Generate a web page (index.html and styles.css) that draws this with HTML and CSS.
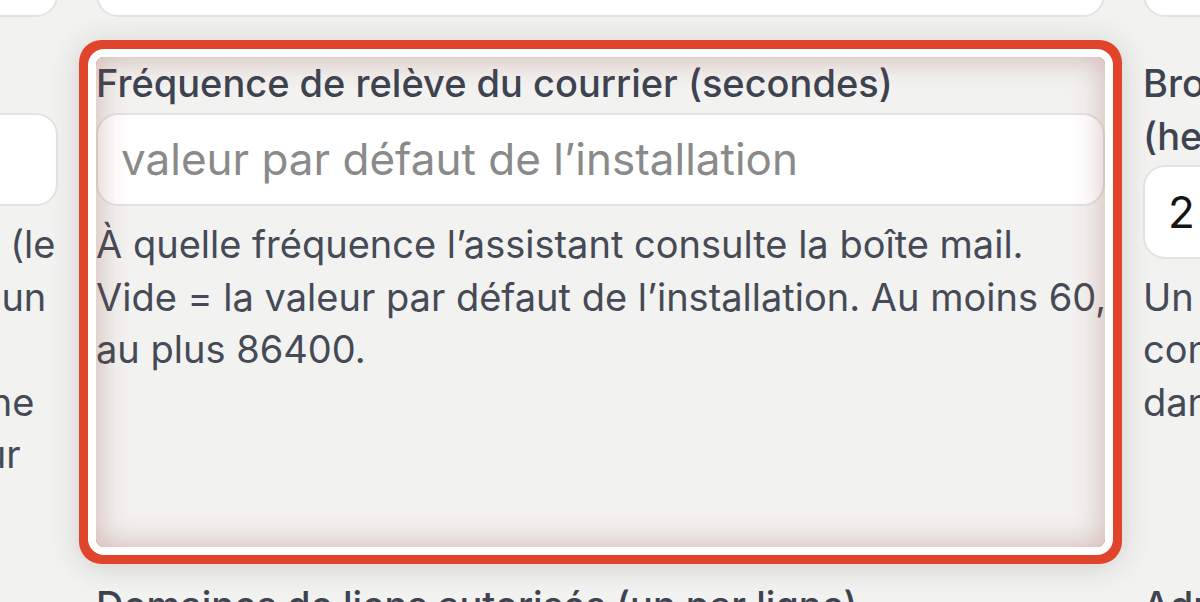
FILE: index.html
```html
<!DOCTYPE html>
<html lang="fr">
<head>
<meta charset="utf-8">
<title>Paramètres de l’assistant</title>
<link rel="stylesheet" href="styles.css">
</head>
<body>
<main class="settings">
  <div class="grid">
    <div class="field">
      <label class="label">Nom affiché</label>
      <input class="input" value="Assistant">
    </div>
    <div class="field">
      <label class="label">Adresse de la boîte mail</label>
      <input class="input" value="assistant@exemple.fr">
    </div>
    <div class="field">
      <label class="label">Serveur IMAP</label>
      <input class="input" value="imap.exemple.fr">
    </div>

    <div class="field">
      <label class="label">Messages par relève</label>
      <input class="input" placeholder="sans limite">
      <p class="help">Nombre maximal de messages relevés à chaque tour (le<br>surplus attend la relève suivante). Vide = sans limite, un<br>message à la fois sinon.<br>Une valeur trop élevée ralentit la relève si le serveur ne<br>répond pas assez vite et freine les autres relèves pour<br>tous les assistants.</p>
    </div>
    <div class="field field--highlight">
      <label class="label">Fréquence de relève du courrier (secondes)</label>
      <input class="input" placeholder="valeur par défaut de l’installation">
      <p class="help">À quelle fréquence l’assistant consulte la boîte mail.<br>Vide = la valeur par défaut de l’installation. Au moins 60,<br>au plus 86400.</p>
    </div>
    <div class="field">
      <label class="label">Brouillons : durée de conservation<br>(heures)</label>
      <input class="input" value="2">
      <p class="help">Un brouillon non envoyé est supprimé après ce délai,<br>conservé sinon dans le dossier des brouillons<br>dans la boîte mail.</p>
    </div>

    <div class="field">
      <label class="label">Signature</label>
    </div>
    <div class="field">
      <label class="label">Domaines de liens autorisés (un par ligne)</label>
    </div>
    <div class="field">
      <label class="label">Adresses autorisées (une par ligne)</label>
    </div>
  </div>
</main>
</body>
</html>
```
FILE: styles.css
```css
html, body {
  margin: 0;
  padding: 0;
}

body {
  width: 1200px;
  height: 602px;
  overflow: hidden;
  background: #f2f2f0;
  font-family: Inter, "Noto Sans", "Liberation Sans", sans-serif;
  color: #414652;
}

.grid {
  display: grid;
  grid-template-columns: repeat(3, 1009px);
  column-gap: 38px;
  row-gap: 32px;
  margin-left: -951px;
  margin-top: -132px;
}

.field {
  display: flex;
  flex-direction: column;
  padding-bottom: 8px;
  min-width: 0;
}

.label {
  font-size: 38px;
  line-height: 52.5px;
  font-weight: 500;
  color: #3e4350;
  margin-bottom: 3px;
}

.input {
  box-sizing: border-box;
  width: 100%;
  height: 93.5px;
  margin: 0;
  padding: 0 23px;
  border: 2px solid #e3e3e1;
  border-radius: 22px;
  background: #ffffff;
  font-family: inherit;
  font-size: 44px;
  color: #141414;
  outline: none;
}

.input::placeholder {
  color: #8a8a8a;
  opacity: 1;
}

.help {
  margin: 12px 0 6px;
  font-size: 38px;
  line-height: 52.5px;
  color: #454a56;
  white-space: nowrap;
}

.field--highlight {
  position: relative;
  z-index: 1;
  border-radius: 8px;
  box-shadow:
    0 0 0 8px #ffffff,
    0 0 0 17px #e0442a,
    0 3px 30px 17px rgba(40, 30, 25, 0.16);
}

.field--highlight::after {
  content: "";
  position: absolute;
  inset: 0;
  border-radius: 8px;
  box-shadow: inset 0 0 28px 4px rgba(150, 70, 60, 0.3);
  pointer-events: none;
}
```
